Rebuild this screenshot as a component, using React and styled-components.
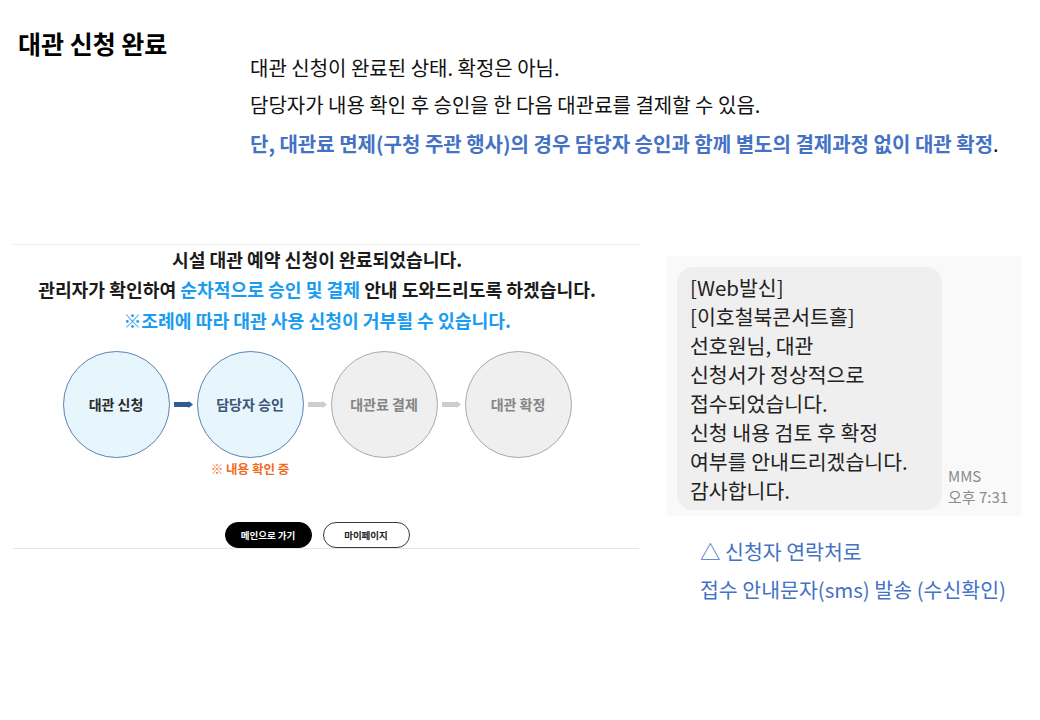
import React from "react";
import styled, { createGlobalStyle } from "styled-components";

const Global = createGlobalStyle`
  html, body { margin: 0; padding: 0; background: #fff; }
  body {
    font-family: "Noto Sans CJK KR", "Noto Sans", sans-serif;
    color: #111;
    -webkit-font-smoothing: antialiased;
  }
`;

const Page = styled.div`
  width: 1040px;
  height: 720px;
  padding-top: 27px;
  box-sizing: border-box;
  overflow: hidden;
`;

const Top = styled.div`
  display: grid;
  grid-template-columns: 250px 1fr;
`;

const Title = styled.h1`
  margin: 0;
  padding-left: 18px;
  font-size: 25px;
  line-height: 32px;
  font-weight: 700;
  color: #000;
  white-space: nowrap;
`;

const Desc = styled.div`
  padding-top: 22px;
  display: flex;
  flex-direction: column;
`;

const DescLine = styled.div`
  font-size: 20px;
  line-height: 37px;
  height: 37px;
  color: #111;
  white-space: nowrap;
  margin-top: ${(p) => (p.$gap ? `${p.$gap}px` : "0")};
  font-weight: ${(p) => (p.$bold ? 700 : 400)};
`;

const Blue = styled.span`
  color: #4472c4;
`;

const Period = styled.span`
  font-weight: 400;
`;

const Lower = styled.div`
  display: flex;
  align-items: flex-start;
  gap: 28px;
  margin-top: 82px;
  padding-left: 13px;
`;

const Panel = styled.section`
  width: 626px;
  box-sizing: border-box;
  border-top: 1px solid #ececec;
  border-bottom: 1px solid #e6e6e6;
  padding-right: 18px;
  display: flex;
  flex-direction: column;
  align-items: center;
`;

const Message = styled.p`
  margin: 0;
  text-align: center;
  font-size: 18.2px;
  line-height: 30.5px;
  font-weight: 700;
  color: #1b1b1b;
  white-space: nowrap;
  &:first-child {
    margin-top: -1.5px;
  }
`;

const Sky = styled.span`
  color: #1a9cf0;
`;

const Steps = styled.div`
  display: flex;
  align-items: flex-start;
  margin-top: 15.5px;
`;

const Step = styled.div`
  display: flex;
  flex-direction: column;
  align-items: center;
  width: 107px;
`;

const Circle = styled.div`
  width: 107px;
  height: 107px;
  box-sizing: border-box;
  border-radius: 50%;
  border: 1px solid ${(p) => (p.$active ? "#5a84b2" : "#a9a9a9")};
  background: ${(p) => (p.$active ? "#e7f5fd" : "#efefef")};
  color: ${(p) => (p.$active ? p.$color || "#2b2b2b" : "#858585")};
  display: flex;
  align-items: center;
  justify-content: center;
  font-size: 14px;
  font-weight: 700;
  white-space: nowrap;
`;

const StepNote = styled.div`
  margin-top: 2px;
  height: 17px;
  line-height: 17px;
  font-size: 12.5px;
  font-weight: 700;
  color: #f26b1d;
  white-space: nowrap;
`;

const ArrowBox = styled.div`
  width: 27px;
  height: 107px;
  display: flex;
  align-items: center;
  justify-content: center;
`;

const Buttons = styled.div`
  display: flex;
  gap: 11px;
  margin-top: 45px;
`;

const Pill = styled.button`
  width: 87px;
  height: 26px;
  box-sizing: border-box;
  border-radius: 13px;
  border: 1px solid ${(p) => (p.$dark ? "#000" : "#3a3a3a")};
  background: ${(p) => (p.$dark ? "#000" : "#fff")};
  color: ${(p) => (p.$dark ? "#fff" : "#222")};
  font-family: inherit;
  font-size: 9.5px;
  font-weight: 700;
  padding: 0;
  cursor: pointer;
`;

const Right = styled.div`
  margin-top: 12px;
  display: flex;
  flex-direction: column;
`;

const SmsPanel = styled.div`
  width: 354px;
  height: 260px;
  box-sizing: border-box;
  background: #f9f9f9;
  padding: 11px 0 6px 10px;
  display: flex;
  align-items: flex-end;
`;

const Bubble = styled.div`
  width: 265px;
  height: 243px;
  box-sizing: border-box;
  background: #efefef;
  border-radius: 16px;
  padding: 6px 0 0 13px;
  font-size: 20.5px;
  line-height: 29px;
  color: #222;
  white-space: nowrap;
`;

const Meta = styled.div`
  margin-left: 6px;
  padding-bottom: 3px;
  font-size: 15px;
  line-height: 21px;
  color: #8a8a8a;
  white-space: nowrap;
`;

const Caption = styled.div`
  margin-top: 16px;
  padding-left: 33px;
  font-size: 20.5px;
  line-height: 38px;
  color: #4472c4;
  white-space: nowrap;
`;

const Arrow = ({ color }) => (
  <svg width="19" height="9" viewBox="0 0 19 9">
    <rect x="0" y="2" width="15" height="5" fill={color} />
    <polygon points="14.5,1 19,4.5 14.5,8" fill={color} />
  </svg>
);

const steps = [
  { label: "대관 신청", active: true },
  { label: "담당자 승인", active: true, color: "#3b5677", note: "※ 내용 확인 중" },
  { label: "대관료 결제" },
  { label: "대관 확정" },
];

export default function App() {
  return (
    <Page>
      <Global />
      <Top>
        <Title>대관 신청 완료</Title>
        <Desc>
          <DescLine>대관 신청이 완료된 상태. 확정은 아님.</DescLine>
          <DescLine>담당자가 내용 확인 후 승인을 한 다음 대관료를 결제할 수 있음.</DescLine>
          <DescLine $bold $gap={2}>
            <Blue>
              단, 대관료 면제(구청 주관 행사)의 경우 담당자 승인과 함께 별도의 결제과정 없이 대관 확정
            </Blue>
            <Period>.</Period>
          </DescLine>
        </Desc>
      </Top>

      <Lower>
        <Panel>
          <Message>시설 대관 예약 신청이 완료되었습니다.</Message>
          <Message>
            관리자가 확인하여 <Sky>순차적으로 승인 및 결제</Sky> 안내 도와드리도록 하겠습니다.
          </Message>
          <Message>
            <Sky>※조례에 따라 대관 사용 신청이 거부될 수 있습니다.</Sky>
          </Message>

          <Steps>
            {steps.map((s, i) => (
              <React.Fragment key={s.label}>
                {i > 0 && (
                  <ArrowBox>
                    <Arrow color={i === 1 ? "#2f5d91" : "#cdcdcd"} />
                  </ArrowBox>
                )}
                <Step>
                  <Circle $active={s.active} $color={s.color}>
                    {s.label}
                  </Circle>
                  <StepNote>{s.note || ""}</StepNote>
                </Step>
              </React.Fragment>
            ))}
          </Steps>

          <Buttons>
            <Pill $dark>메인으로 가기</Pill>
            <Pill>마이페이지</Pill>
          </Buttons>
        </Panel>

        <Right>
          <SmsPanel>
            <Bubble>
              [Web발신]
              <br />
              [이호철북콘서트홀]
              <br />
              선호원님, 대관
              <br />
              신청서가 정상적으로
              <br />
              접수되었습니다.
              <br />
              신청 내용 검토 후 확정
              <br />
              여부를 안내드리겠습니다.
              <br />
              감사합니다.
            </Bubble>
            <Meta>
              MMS
              <br />
              오후 7:31
            </Meta>
          </SmsPanel>
          <Caption>
            △ 신청자 연락처로
            <br />
            접수 안내문자(sms) 발송 (수신확인)
          </Caption>
        </Right>
      </Lower>
    </Page>
  );
}
